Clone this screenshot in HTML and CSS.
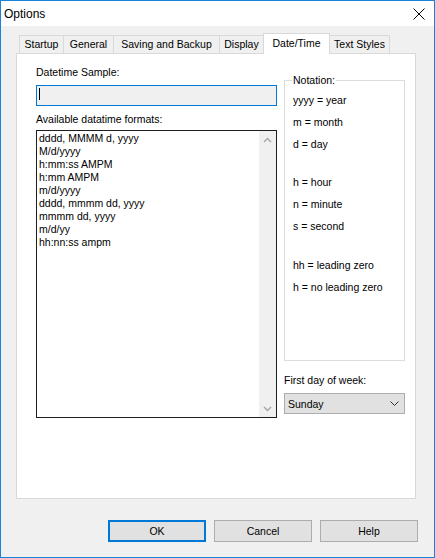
FILE: index.html
```html
<!DOCTYPE html>
<html>
<head>
<meta charset="utf-8">
<link rel="stylesheet" href="styles.css">
</head>
<body>
<div class="window">
  <div class="titlebar">
    <span class="title">Options</span>
    <svg class="close" width="12" height="12" viewBox="0 0 12 12"><path d="M0.5 0.5 L11.5 11.5 M11.5 0.5 L0.5 11.5" stroke="#000" stroke-width="1" fill="none"/></svg>
  </div>
  <div class="body">
    <div class="tabs">
      <div class="tab t-startup">Startup</div>
      <div class="tab t-general">General</div>
      <div class="tab t-saving">Saving and Backup</div>
      <div class="tab t-display">Display</div>
      <div class="tab t-date selected">Date/Time</div>
      <div class="tab t-text">Text Styles</div>
    </div>
    <div class="panel">
      <div class="col-left">
        <div class="label">Datetime Sample:</div>
        <div class="input"><span class="caret"></span></div>
        <div class="label label-list">Available datatime formats:</div>
        <div class="listbox">
          <ul class="items">
            <li>dddd, MMMM d, yyyy</li>
            <li>M/d/yyyy</li>
            <li>h:mm:ss AMPM</li>
            <li>h:mm AMPM</li>
            <li>m/d/yyyy</li>
            <li>dddd, mmmm dd, yyyy</li>
            <li>mmmm dd, yyyy</li>
            <li>m/d/yy</li>
            <li>hh:nn:ss ampm</li>
          </ul>
          <div class="scrollbar">
            <div class="arrow"><svg width="9" height="6" viewBox="0 0 9 6"><path d="M1 5 L4.5 1.5 L8 5" stroke="#a6a6a6" stroke-width="1.4" fill="none"/></svg></div>
            <div class="arrow"><svg width="9" height="6" viewBox="0 0 9 6"><path d="M1 1 L4.5 4.5 L8 1" stroke="#a6a6a6" stroke-width="1.4" fill="none"/></svg></div>
          </div>
        </div>
      </div>
      <div class="col-right">
        <fieldset class="notation">
          <legend>Notation:</legend>
          <div class="group g1">
            <div class="note">yyyy = year</div>
            <div class="note">m = month</div>
            <div class="note">d = day</div>
          </div>
          <div class="group g2">
            <div class="note">h = hour</div>
            <div class="note">n = minute</div>
            <div class="note">s = second</div>
          </div>
          <div class="group g3">
            <div class="note">hh = leading zero</div>
            <div class="note">h = no leading zero</div>
          </div>
        </fieldset>
        <div class="label label-week">First day of week:</div>
        <div class="select">
          <span>Sunday</span>
          <svg width="9" height="5" viewBox="0 0 9 5"><path d="M0.5 0.5 L4.5 4.5 L8.5 0.5" stroke="#333" stroke-width="1" fill="none"/></svg>
        </div>
      </div>
    </div>
    <div class="buttons">
      <div class="btn default">OK</div>
      <div class="btn">Cancel</div>
      <div class="btn">Help</div>
    </div>
  </div>
</div>
</body>
</html>
```
FILE: styles.css
```css
html, body {
  margin: 0;
  padding: 0;
}
body {
  font-family: "Liberation Sans", Arial, sans-serif;
  font-size: 10.5px;
  color: #000;
  background: #f0f0f0;
}
.window {
  width: 435px;
  height: 558px;
  box-sizing: border-box;
  border: 1px solid #1883d7;
  background: #f0f0f0;
  display: flex;
  flex-direction: column;
}
.titlebar {
  height: 25px;
  background: #fff;
  display: flex;
  align-items: center;
  padding-left: 3px;
}
.title {
  font-size: 12px;
  font-family: "Liberation Sans", Arial, sans-serif;
}
.close {
  margin-left: auto;
  margin-right: 9px;
}
.body {
  padding-top: 7px;
  padding-left: 15px;
}
.tabs {
  display: flex;
  align-items: flex-end;
  height: 20px;
  margin-left: 3px;
}
.tab {
  height: 18px;
  box-sizing: border-box;
  border: 1px solid #d9d9d9;
  border-bottom: none;
  background: #f0f0f0;
  text-align: center;
  line-height: 17px;
  margin-left: -1px;
  white-space: nowrap;
}
.tab:first-child { margin-left: 0; }
.t-startup { width: 45px; }
.t-general { width: 51px; }
.t-saving { width: 107px; }
.t-display { width: 45px; }
.t-date { width: 67px; }
.t-text { width: 61px; }
.tab.selected {
  height: 21px;
  background: #fff;
  margin-bottom: -1px;
  position: relative;
  z-index: 1;
  line-height: 19px;
}
.panel {
  width: 400px;
  height: 446px;
  box-sizing: border-box;
  border: 1px solid #d9d9d9;
  background: #fff;
  display: flex;
  gap: 7px;
  padding: 12px 0 0 19px;
}
.col-left {
  width: 241px;
  display: flex;
  flex-direction: column;
}
.label {
  line-height: 13px;
  height: 13px;
  white-space: nowrap;
}
.input {
  margin-top: 6px;
  height: 21px;
  box-sizing: border-box;
  border: 1px solid #0078d7;
  background: #f0f0f0;
  padding: 2px 0 0 2px;
}
.caret {
  display: block;
  width: 1px;
  height: 12px;
  background: #000;
}
.label-list {
  margin-top: 7px;
}
.listbox {
  margin-top: 4px;
  height: 288px;
  box-sizing: border-box;
  border: 1px solid #1e1e1e;
  display: flex;
}
.items {
  flex: 1;
  list-style: none;
  margin: 0;
  padding: 1px 0 0 2px;
  line-height: 13px;
  white-space: nowrap;
}
.scrollbar {
  width: 17px;
  background: #f0f0f0;
  display: flex;
  flex-direction: column;
  justify-content: space-between;
}
.arrow {
  height: 17px;
  display: flex;
  align-items: center;
  justify-content: center;
}
.col-right {
  width: 121px;
  display: flex;
  flex-direction: column;
  margin-top: 8px;
}
.notation {
  margin: 0;
  padding: 0 0 0 8px;
  border: 1px solid #dcdcdc;
  height: 287px;
  box-sizing: border-box;
  min-width: 0;
}
.notation legend {
  padding: 0 1px;
  margin-left: -1px;
  line-height: 13px;
}
.group {
  display: flex;
  flex-direction: column;
  gap: 9px;
}
.g1 {
  margin-top: 7px;
}
.g2 {
  margin-top: 25px;
}
.g3 {
  margin-top: 26px;
}
.note {
  line-height: 13px;
  white-space: nowrap;
}
.label-week {
  margin-top: 13px;
}
.select {
  margin-top: 6px;
  height: 21px;
  box-sizing: border-box;
  border: 1px solid #adadad;
  background: #e1e1e1;
  display: flex;
  align-items: center;
  justify-content: space-between;
  padding: 0 5px 0 3px;
}
.buttons {
  display: flex;
  gap: 8px;
  margin-top: 21px;
  margin-left: 92px;
}
.btn {
  width: 98px;
  height: 22px;
  box-sizing: border-box;
  border: 1px solid #adadad;
  background: #e1e1e1;
  display: flex;
  align-items: center;
  justify-content: center;
}
.btn.default {
  border: 2px solid #0078d7;
}
```
